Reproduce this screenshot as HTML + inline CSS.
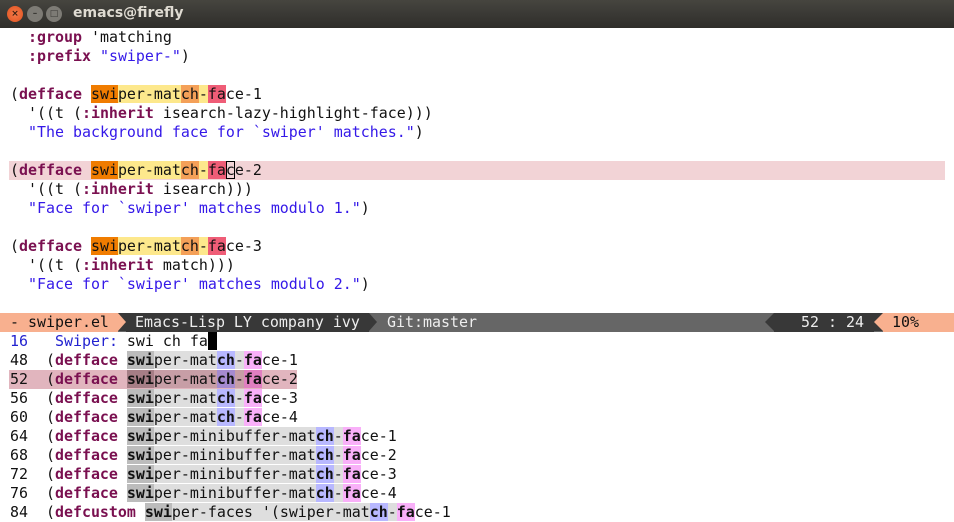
<!DOCTYPE html>
<html><head><meta charset="utf-8"><style>
*{margin:0;padding:0;box-sizing:border-box}
body{width:954px;height:522px;overflow:hidden;background:#fff;font-family:"DejaVu Sans Mono","Liberation Mono",monospace;font-size:14.95px;color:#111}
#tb{position:absolute;left:0;top:0;width:954px;height:28px;background:linear-gradient(#46453f,#3a3935 50%,#2f2e2a)}
#tb .t{position:absolute;left:73px;top:5px;font-family:"DejaVu Sans","Liberation Sans",sans-serif;font-weight:bold;font-size:14px;color:#dfdbd2}
.btn{position:absolute;top:6px;width:16px;height:16px;border-radius:50%;font-family:"DejaVu Sans",sans-serif;font-size:9px;line-height:16px;text-align:center;color:#3c3b37;font-weight:bold}
.l{position:absolute;left:10px;height:19px;line-height:19px;white-space:pre}
.k{color:#7a1050;font-weight:bold}
.s{color:#3418e8}
.o1{background:#f07c00}.y{background:#fde88c}.o2{background:#f4a058}.r{background:#ef5d77}
.cur{outline:1px solid #000;outline-offset:-1px}
.g1{background:#bcbcbc;font-weight:bold}.g2{background:#dedede}.b{background:#b8b8ff;font-weight:bold}.p{background:#f9b0f9;font-weight:bold}
.sel .g1{background:#a67e86}.sel .g2{background:#c79ea6}.sel .b{background:#a58ad0}.sel .p{background:#e07fc0}
#ml{position:absolute;left:0;top:313px;width:954px;height:19px;background:#666;line-height:19px;white-space:pre;color:#eee}
#ml div{position:absolute;top:0;height:19px}
</style></head><body>
<div id="tb">
<div class="btn" style="left:7px;background:radial-gradient(#f57a4a,#e0521f);color:#3a2010">×</div>
<div class="btn" style="left:27px;background:#7d7b75">–</div>
<div class="btn" style="left:46px;background:#7d7b75">□</div>
<div class="t">emacs@firefly</div>
</div>
<div class="l" style="top:28px">  <span class="k">:group</span> 'matching</div>
<div class="l" style="top:47px">  <span class="k">:prefix</span> <span class="s">"swiper-"</span>)</div>
<div class="l" style="top:85px">(<span class="k">defface</span> <span class="o1">swi</span><span class="y">per-mat</span><span class="o2">ch</span><span class="y">-</span><span class="r">fa</span>ce-1</div>
<div class="l" style="top:104px">  '((t (<span class="k">:inherit</span> isearch-lazy-highlight-face)))</div>
<div class="l" style="top:123px">  <span class="s">"The background face for `swiper' matches."</span>)</div>
<div style="position:absolute;left:9px;top:161px;width:936px;height:19px;background:#f2d3d6"></div>
<div class="l" style="top:161px">(<span class="k">defface</span> <span class="o1">swi</span><span class="y">per-mat</span><span class="o2">ch</span><span class="y">-</span><span class="r">fa</span><span class="cur">c</span>e-2</div>
<div class="l" style="top:180px">  '((t (<span class="k">:inherit</span> isearch)))</div>
<div class="l" style="top:199px">  <span class="s">"Face for `swiper' matches modulo 1."</span>)</div>
<div class="l" style="top:237px">(<span class="k">defface</span> <span class="o1">swi</span><span class="y">per-mat</span><span class="o2">ch</span><span class="y">-</span><span class="r">fa</span>ce-3</div>
<div class="l" style="top:256px">  '((t (<span class="k">:inherit</span> match)))</div>
<div class="l" style="top:275px">  <span class="s">"Face for `swiper' matches modulo 2."</span>)</div>
<div id="ml">
<div style="left:0;width:118px;background:#f8b08f;color:#111;padding-left:10px">- swiper.el</div>
<div style="left:118px;width:0;height:0;border-top:9.5px solid transparent;border-bottom:9.5px solid transparent;border-left:8px solid #f8b08f;background:#383838"></div>
<div style="left:126px;width:243px;background:#383838;padding-left:9px">Emacs-Lisp LY company ivy</div>
<div style="left:369px;width:0;height:0;border-top:9.5px solid transparent;border-bottom:9.5px solid transparent;border-left:8px solid #383838;background:#666"></div>
<div style="left:387px">Git:master</div>
<div style="left:765px;width:0;height:0;border-top:9.5px solid transparent;border-bottom:9.5px solid transparent;border-right:9px solid #383838"></div>
<div style="left:774px;width:100px;background:#383838;padding-left:27px">52 : 24</div>
<div style="left:874px;width:0;height:0;border-top:9.5px solid transparent;border-bottom:9.5px solid transparent;border-right:9px solid #f8b08f;background:#383838"></div>
<div style="left:883px;width:71px;background:#f8b08f;color:#111;padding-left:9px">10%</div>
</div>
<div class="l" style="top:332px"><span style="color:#2222d0">16</span>   <span style="color:#2222d0">Swiper:</span> swi ch fa<span style="background:#000"> </span></div>
<div class="l" style="top:351px">48  (<span class="k">defface</span> <span class="g1">swi</span><span class="g2">per-mat</span><span class="b">ch</span><span class="g2">-</span><span class="p">fa</span>ce-1</div>
<div style="position:absolute;left:9px;top:370px;width:288px;height:19px;background:#e1b5be"></div>
<div class="l sel" style="top:370px">52  (<span class="k">defface</span> <span class="g1">swi</span><span class="g2">per-mat</span><span class="b">ch</span><span class="g2">-</span><span class="p">fa</span>ce-2</div>
<div class="l" style="top:389px">56  (<span class="k">defface</span> <span class="g1">swi</span><span class="g2">per-mat</span><span class="b">ch</span><span class="g2">-</span><span class="p">fa</span>ce-3</div>
<div class="l" style="top:408px">60  (<span class="k">defface</span> <span class="g1">swi</span><span class="g2">per-mat</span><span class="b">ch</span><span class="g2">-</span><span class="p">fa</span>ce-4</div>
<div class="l" style="top:427px">64  (<span class="k">defface</span> <span class="g1">swi</span><span class="g2">per-minibuffer-mat</span><span class="b">ch</span><span class="g2">-</span><span class="p">fa</span>ce-1</div>
<div class="l" style="top:446px">68  (<span class="k">defface</span> <span class="g1">swi</span><span class="g2">per-minibuffer-mat</span><span class="b">ch</span><span class="g2">-</span><span class="p">fa</span>ce-2</div>
<div class="l" style="top:465px">72  (<span class="k">defface</span> <span class="g1">swi</span><span class="g2">per-minibuffer-mat</span><span class="b">ch</span><span class="g2">-</span><span class="p">fa</span>ce-3</div>
<div class="l" style="top:484px">76  (<span class="k">defface</span> <span class="g1">swi</span><span class="g2">per-minibuffer-mat</span><span class="b">ch</span><span class="g2">-</span><span class="p">fa</span>ce-4</div>
<div class="l" style="top:503px">84  (<span class="k">defcustom</span> <span class="g1">swi</span><span class="g2">per-faces '(swiper-mat</span><span class="b">ch</span><span class="g2">-</span><span class="p">fa</span>ce-1</div>
</body></html>
